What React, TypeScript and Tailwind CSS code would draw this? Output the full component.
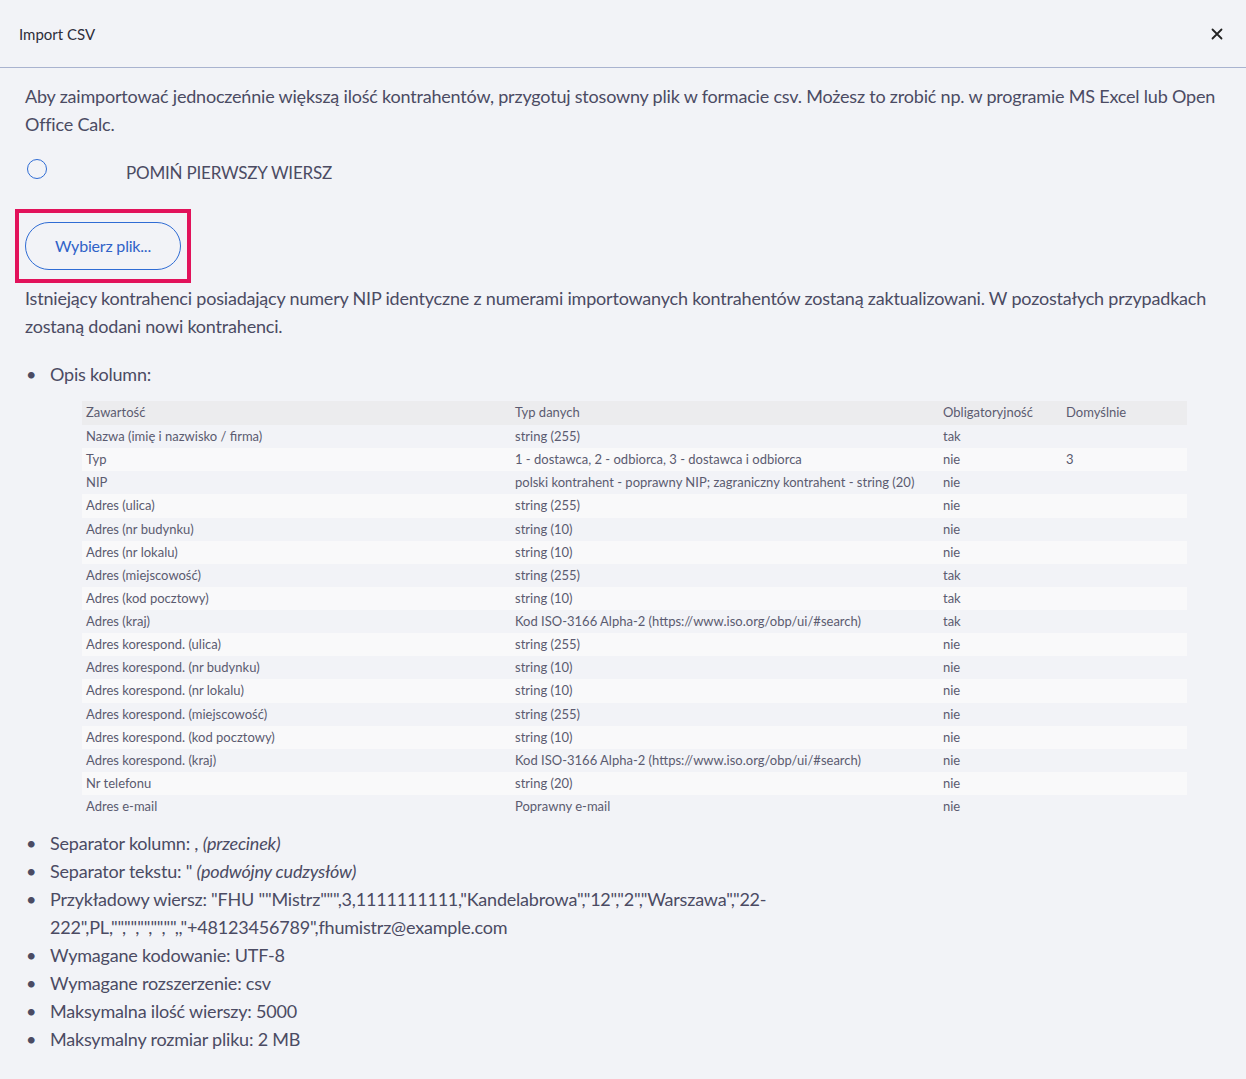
import React from "react";

const rows: [string, string, string, string][] = [
  ["Nazwa (imię i nazwisko / firma)", "string (255)", "tak", ""],
  ["Typ", "1 - dostawca, 2 - odbiorca, 3 - dostawca i odbiorca", "nie", "3"],
  ["NIP", "polski kontrahent - poprawny NIP; zagraniczny kontrahent - string (20)", "nie", ""],
  ["Adres (ulica)", "string (255)", "nie", ""],
  ["Adres (nr budynku)", "string (10)", "nie", ""],
  ["Adres (nr lokalu)", "string (10)", "nie", ""],
  ["Adres (miejscowość)", "string (255)", "tak", ""],
  ["Adres (kod pocztowy)", "string (10)", "tak", ""],
  ["Adres (kraj)", "Kod ISO-3166 Alpha-2 (https://www.iso.org/obp/ui/#search)", "tak", ""],
  ["Adres korespond. (ulica)", "string (255)", "nie", ""],
  ["Adres korespond. (nr budynku)", "string (10)", "nie", ""],
  ["Adres korespond. (nr lokalu)", "string (10)", "nie", ""],
  ["Adres korespond. (miejscowość)", "string (255)", "nie", ""],
  ["Adres korespond. (kod pocztowy)", "string (10)", "nie", ""],
  ["Adres korespond. (kraj)", "Kod ISO-3166 Alpha-2 (https://www.iso.org/obp/ui/#search)", "nie", ""],
  ["Nr telefonu", "string (20)", "nie", ""],
  ["Adres e-mail", "Poprawny e-mail", "nie", ""],
];

function Bullet({ children }: { children: React.ReactNode }) {
  return (
    <li className="flex">
      <span className="w-[25px] shrink-0 pl-[1px] text-[#4b4b63]">•</span>
      <span className="flex-1">{children}</span>
    </li>
  );
}

export default function App() {
  return (
    <div
      className="min-h-[1079px] w-full bg-[#f2f3f7] text-[#4b4b63]"
      style={{ fontFamily: "Lato, 'Noto Sans', sans-serif" }}
    >
      <div className="flex h-[68px] items-center justify-between border-b border-[#a9b3cf] pl-[19px] pr-[23px]">
        <span className="mt-[1px] text-[15px] text-[#2d2d3a]">Import CSV</span>
        <svg width="12" height="12" viewBox="0 0 12 12" className="text-[#222]">
          <path d="M1.5 1.5 L10.5 10.5 M10.5 1.5 L1.5 10.5" stroke="currentColor" strokeWidth="1.8" strokeLinecap="round" />
        </svg>
      </div>

      <div className="pl-[25px] pr-[10px] pt-[14px] text-[18px] leading-[28px] tracking-[-0.2px]">
        <p>
          Aby zaimportować jednoczeńnie większą ilość kontrahentów, przygotuj stosowny plik w formacie csv. Możesz to zrobić np. w programie MS Excel lub Open Office Calc.
        </p>

        <div className="mt-[19px] flex h-[24px] items-center">
          <span className="ml-[2px] h-[20px] w-[20px] rounded-full border-[1.5px] border-[#2f6cd4]" />
          <span className="ml-[79px] mt-[7px] text-[17px] uppercase">Pomiń pierwszy wiersz</span>
        </div>

        <div className="-ml-[10px] mt-[28px] inline-block border-[4px] border-[#e2125b] px-[6px] py-[9px]">
          <button className="h-[48px] w-[156px] rounded-full border border-[#2f6cd4] text-[16px] text-[#2f62c8]">
            Wybierz plik...
          </button>
        </div>

        <p className="mt-[1px]">
          Istniejący kontrahenci posiadający numery NIP identyczne z numerami importowanych kontrahentów zostaną zaktualizowani. W pozostałych przypadkach zostaną dodani nowi kontrahenci.
        </p>

        <ul className="mt-[20px]">
          <Bullet>Opis kolumn:</Bullet>
        </ul>

        <table className="ml-[57px] mt-[13px] w-[1105px] table-fixed border-collapse text-[13px] leading-[23.125px] tracking-normal text-[#5b5b70]">
          <colgroup>
            <col className="w-[429px]" />
            <col className="w-[428px]" />
            <col className="w-[123px]" />
            <col />
          </colgroup>
          <thead>
            <tr className="h-[24px] bg-[#ececee]">
              <th className="pl-[4px] text-left font-normal">Zawartość</th>
              <th className="pl-[4px] text-left font-normal">Typ danych</th>
              <th className="pl-[4px] text-left font-normal">Obligatoryjność</th>
              <th className="pl-[4px] text-left font-normal">Domyślnie</th>
            </tr>
          </thead>
          <tbody>
            {rows.map((r, i) => (
              <tr key={i} className={i % 2 === 1 ? "bg-[#f9f9fa]" : ""}>
                <td className="pl-[4px]">{r[0]}</td>
                <td className="pl-[4px]">{r[1]}</td>
                <td className="pl-[4px]">{r[2]}</td>
                <td className="pl-[4px]">{r[3]}</td>
              </tr>
            ))}
          </tbody>
        </table>

        <ul className="mt-[11px] pb-[20px]">
          <Bullet>
            Separator kolumn: , <i>(przecinek)</i>
          </Bullet>
          <Bullet>
            Separator tekstu: " <i>(podwójny cudzysłów)</i>
          </Bullet>
          <Bullet>
            <span className="block max-w-[745px]">
              Przykładowy wiersz: "FHU ""Mistrz""",3,1111111111,"Kandelabrowa","12","2","Warszawa","22-222",PL,"","","","","",,"+48123456789",fhumistrz@example.com
            </span>
          </Bullet>
          <Bullet>Wymagane kodowanie: UTF-8</Bullet>
          <Bullet>Wymagane rozszerzenie: csv</Bullet>
          <Bullet>Maksymalna ilość wierszy: 5000</Bullet>
          <Bullet>Maksymalny rozmiar pliku: 2 MB</Bullet>
        </ul>
      </div>
    </div>
  );
}
